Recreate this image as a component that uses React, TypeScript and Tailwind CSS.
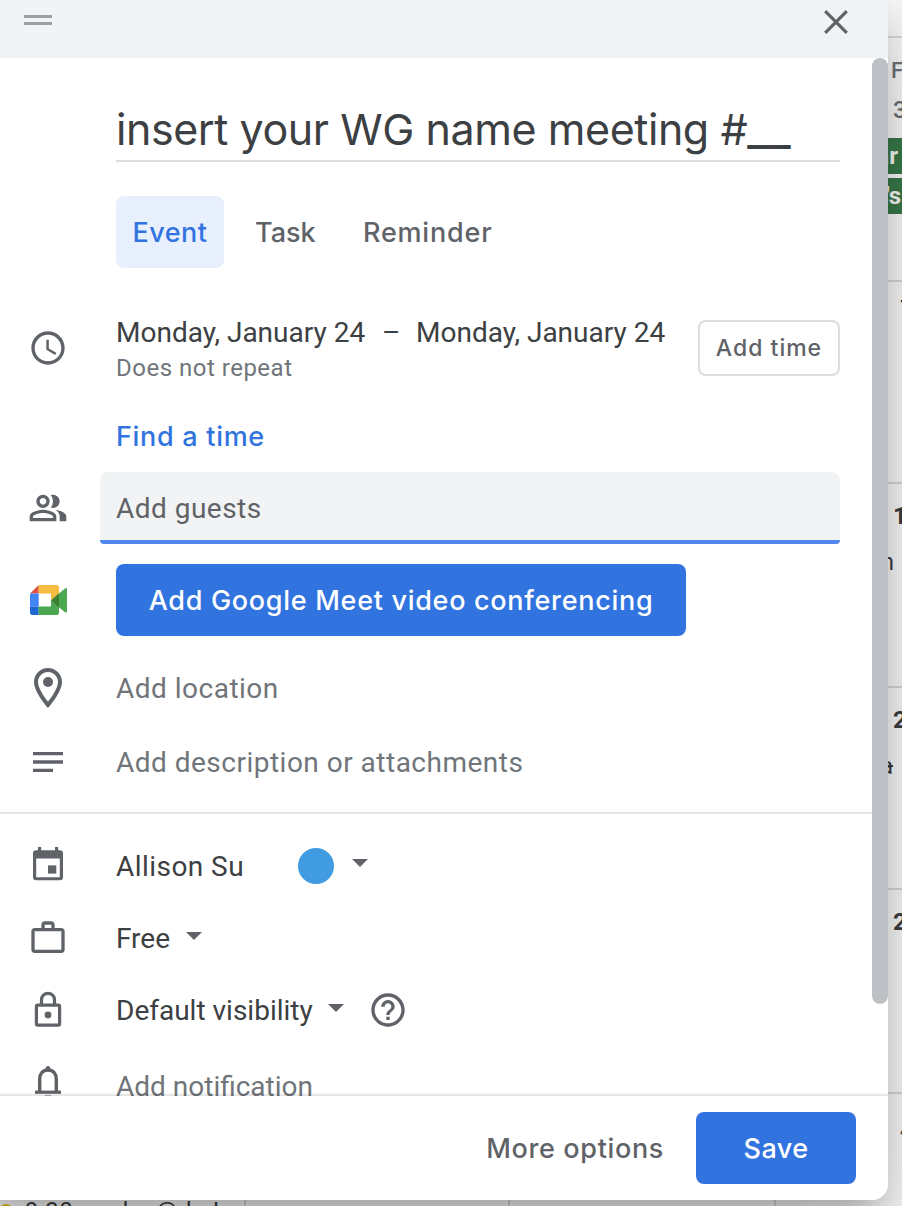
import type { ReactNode } from "react";
import { MdOutlinePeopleAlt, MdAccessTime, MdHelpOutline, MdNotes, MdWorkOutline } from "react-icons/md";

function Row({ icon, className, children }: { icon?: ReactNode; className: string; children: ReactNode }) {
  return (
    <div className={`flex items-center ${className}`}>
      <div className="flex w-24 shrink-0 items-center justify-center text-[#5f6368]">{icon}</div>
      <div className="flex min-w-0 flex-1 items-center">{children}</div>
    </div>
  );
}

function MeetLogo() {
  return (
    <svg width="37" height="30" viewBox="0 0 37 30">
      <path d="M0 8.5 8.7 0v8.5z" fill="#dd5144" />
      <path d="M8.7 0H26.5Q29 0 29 2.5V9l-8 6.5V8.5H8.7z" fill="#f6bc42" />
      <path d="M0 8.5h8.7v13H0z" fill="#4285f4" />
      <path d="M0 21.5h8.7V30H2.5Q0 30 0 27.5z" fill="#1f67d2" />
      <path d="M8.7 21.5H21V15l8 6.5v6Q29 30 26.5 30H8.7z" fill="#4ba851" />
      <path d="m21 15.2 8-7v14.6z" fill="#3b8035" />
      <path d="m29 8.4 6-5q2-1 2 1v21.8q0 2-2 1l-6-5z" fill="#4ba851" />
    </svg>
  );
}

function PinIcon() {
  return (
    <svg width="28" height="40" viewBox="5 2 14 20" fill="currentColor">
      <path d="M12 2C8.13 2 5 5.13 5 9c0 5.25 7 13 7 13s7-7.75 7-13c0-3.87-3.13-7-7-7zm0 2c2.76 0 5 2.24 5 5 0 2.88-2.88 7.19-5 9.88C9.92 16.21 7 11.85 7 9c0-2.76 2.24-5 5-5z" />
      <circle cx="12" cy="9" r="2.5" />
    </svg>
  );
}

function EventIcon() {
  return (
    <svg width="30" height="34" viewBox="0 0 30 34" className="mb-1" fill="currentColor">
      <path d="M5 0h3.2v4H5zM22 0h3.2v4H22z" />
      <path fillRule="evenodd" d="M3 3.3h24a3 3 0 0 1 3 3v24a3 3 0 0 1-3 3H3a3 3 0 0 1-3-3v-24a3 3 0 0 1 3-3zM3.2 11.6v18.6h23.6V11.6z" />
      <path d="M15 18.4h8.3v8.2H15z" />
    </svg>
  );
}

function LockIcon() {
  return (
    <svg width="40" height="40" viewBox="0 0 40 40" fill="none" stroke="currentColor" strokeWidth="3.2">
      <rect x="8.4" y="15.2" width="23.2" height="20" rx="1.4" />
      <path d="M13.5 15V9.8a6.5 6.5 0 0 1 13 0V15" />
      <circle cx="20" cy="25" r="3.4" fill="currentColor" stroke="none" />
    </svg>
  );
}

function BellIcon() {
  return (
    <svg width="40" height="40" viewBox="0 0 40 40" className="mb-1" fill="none" stroke="currentColor" strokeWidth="3.4">
      <path d="M11.7 28V15.2C11.7 9.6 15 6 20 6s8.3 3.6 8.3 9.2V28" />
      <path d="M7 28.2h26" strokeWidth="3.2" />
      <path d="M17.7 6V4.3a2.3 2.3 0 0 1 4.6 0V6z" fill="currentColor" stroke="none" />
      <path d="M16.7 31.5h6.6a3.3 3.3 0 0 1-6.6 0z" fill="currentColor" stroke="none" />
    </svg>
  );
}

function Caret({ className = "mb-1" }: { className?: string }) {
  return (
    <svg width="16" height="8" viewBox="0 0 16 8" className={className}>
      <path d="M0 0h16L8 8z" fill="#5f6368" />
    </svg>
  );
}

function CloseIcon() {
  return (
    <svg width="24" height="24" viewBox="0 0 24 24" stroke="#5f6368" strokeWidth="3.2">
      <path d="m1.2 1.2 21.6 21.6M22.8 1.2 1.2 22.8" />
    </svg>
  );
}

function CalendarBackdrop() {
  return (
    <div className="grid h-full grid-cols-[244px_264px_266px_1fr] bg-white">
      <div className="flex flex-col justify-end overflow-hidden">
        <div className="flex h-[7px] items-start font-[Roboto] text-2xl leading-6 whitespace-pre text-[#3c4043]">
          <span className="mt-[5px] ml-[-1px] size-[14px] shrink-0 rounded-full bg-[#f6bf26]" />
          <span className="ml-3 tracking-[0.5px]">9:30am due@duJ</span>
        </div>
      </div>
      <div className="border-l-2 border-[#dadce0]" />
      <div className="border-l-2 border-[#dadce0]" />
      <div className="flex flex-col overflow-hidden border-l-2 border-[#dadce0] font-[Roboto] text-[#3c4043]">
        <div className="h-[38px] shrink-0 border-b-2 border-[#dadce0]" />
        <div className="h-[244px] shrink-0 border-b-2 border-[#dadce0] whitespace-nowrap">
          <div className="h-9 pt-[21px] pl-[115px] text-[22px] leading-6 font-medium text-[#70757a]">FRI</div>
          <div className="h-[64px] pt-[24px] pl-[117px] text-2xl leading-6 font-medium text-[#70757a]">31</div>
          <div className="mb-1 flex h-9 items-center bg-[#3b7d4b] pl-[52px] text-2xl font-bold text-white">
            <span className="w-[70px] text-right">Year</span>
          </div>
          <div className="flex h-9 items-center bg-[#3b7d4b] pl-[20px] text-2xl font-bold text-white">
            <span className="w-[105px] text-right">Year's</span>
          </div>
        </div>
        <div className="h-[202px] shrink-0 border-b-2 border-[#dadce0] pt-[15px] pl-[124px] text-2xl leading-6 font-medium">7</div>
        <div className="h-[204px] shrink-0 border-b-2 border-[#dadce0] pt-5 whitespace-nowrap">
          <div className="pl-[117px] text-2xl leading-6 font-bold">14</div>
          <div className="mt-[22px] flex w-[118px] justify-end text-2xl leading-6">Sign in</div>
        </div>
        <div className="h-[202px] shrink-0 border-b-2 border-[#dadce0] pt-5 whitespace-nowrap">
          <div className="pl-[117px] text-2xl leading-6 font-bold">21</div>
          <div className="mt-[22px] flex w-[117px] justify-end text-2xl leading-6 line-through">Yoga</div>
        </div>
        <div className="h-[204px] shrink-0 border-b-2 border-[#dadce0] pt-5 pl-[117px] text-2xl leading-6 font-bold">28</div>
        <div className="pt-6 pl-[124px] text-2xl leading-6 font-medium">4</div>
      </div>
    </div>
  );
}

export default function App() {
  return (
    <div className="relative h-[1206px] w-[902px] overflow-hidden font-[Roboto,sans-serif]">
      <CalendarBackdrop />
      <div className="absolute -top-[14px] -left-5 flex h-[1214px] w-[908px] flex-col overflow-hidden rounded-2xl bg-white pl-5 shadow-[0_48px_76px_6px_rgba(0,0,0,0.14),0_18px_92px_16px_rgba(0,0,0,0.12),0_22px_30px_-14px_rgba(0,0,0,0.2)]">
        <header className="-ml-5 flex h-[72px] shrink-0 items-center justify-between bg-[#f1f3f4] pr-10 pl-11">
          <div className="flex w-7 flex-col gap-1 self-start pt-[29px]">
            <span className="h-[3px] bg-[#9aa0a6]" />
            <span className="h-[3px] bg-[#9aa0a6]" />
          </div>
          <CloseIcon />
        </header>

        <main className="flex h-[1038px] shrink-0 overflow-hidden">
          <div className="w-[872px] shrink-0">
            <div className="mr-8 ml-[116px] flex h-[104px] items-end border-b-2 border-[#dadce0] pb-[5px] font-[Inter] text-[43px] leading-[52px] tracking-[-0.43px] whitespace-nowrap text-[#3c4043]">
              <div className="h-[52px]">
                insert your WG name meeting #<span className="text-[48px] leading-none tracking-[-0.3px]">__</span>
              </div>
            </div>

            <div className="mt-[34px] ml-[116px] flex h-[72px] items-center font-[Inter] text-[27px] font-medium text-[#5f6368]">
              <span className="flex h-full w-[108px] items-center justify-center rounded-lg bg-[#e8f0fe] pt-[2px] tracking-[0.5px] text-[#3174e0]">Event</span>
              <span className="mt-[2px] ml-[31px] w-[60px]">Task</span>
              <span className="mt-[2px] ml-12 tracking-[0.8px]">Reminder</span>
            </div>

            <Row className="mt-[52px] h-14 pr-8" icon={<MdAccessTime size={40} />}>
              <div className="mt-[5px] ml-5 flex-1 whitespace-nowrap">
                <div className="flex text-[28px] leading-9 text-[#3c4043]">
                  <span className="w-[249px]">Monday, January 24</span>
                  <span className="w-[51px] pl-[17px]">–</span>
                  <span>Monday, January 24</span>
                </div>
                <div className="-mt-px mb-px text-2xl leading-9 tracking-[0.5px] text-[#70757a]">Does not repeat</div>
              </div>
              <button className="h-14 w-[142px] rounded-lg border-2 border-[#dadce0] font-[Inter] text-[23px] font-medium tracking-[1px] whitespace-nowrap text-[#5f6368]">
                Add time
              </button>
            </Row>

            <Row className="mt-10 h-10">
              <span className="mt-[2px] ml-5 font-[Inter] text-[27px] font-medium tracking-[0.7px] text-[#3174e0]">Find a time</span>
            </Row>

            <Row className="mt-4 h-[72px] pr-8" icon={<MdOutlinePeopleAlt size={40} />}>
              <div className="ml-1 flex h-[72px] flex-1 items-center rounded-lg rounded-b-[4px] border-b-4 border-[#4f87ec] bg-[#f1f3f4] pl-4 text-[28px] tracking-[0.48px] text-[#5f6368]">
                <span className="mt-1.5">Add guests</span>
              </div>
            </Row>

            <Row className="mt-5 h-[72px]" icon={<MeetLogo />}>
              <button className="ml-5 h-[72px] w-[570px] rounded-lg bg-[#3174e0] pt-[2px] font-[Inter] text-[27px] font-medium tracking-[0.7px] whitespace-nowrap text-white">
                Add Google Meet video conferencing
              </button>
            </Row>

            <Row className="mt-4 h-[72px]" icon={<PinIcon />}>
              <span className="mt-[2px] ml-5 text-[28px] tracking-[0.49px] text-[#70757a]">Add location</span>
            </Row>
            <Row className="mt-[2px] h-[72px]" icon={<MdNotes size={40} />}>
              <span className="mt-[2px] ml-5 text-[28px] tracking-[0.49px] text-[#70757a]">Add description or attachments</span>
            </Row>

            <div className="mt-[14px] h-[2px] bg-[#e5e5e5]" />

            <Row className="mt-4 h-[72px]" icon={<EventIcon />}>
              <span className="mt-[2px] ml-5 w-[182px] text-[28px] tracking-[0.45px] text-[#3c4043]">Allison Su</span>
              <span className="mr-[18px] size-9 rounded-full bg-[#419be0]" />
              <Caret className="mb-1.5" />
            </Row>
            <Row className="h-[72px]" icon={<MdWorkOutline size={40} />}>
              <span className="mt-[2px] mr-4 ml-5 text-[28px] text-[#3c4043]">Free</span>
              <Caret />
            </Row>
            <Row className="h-[72px]" icon={<LockIcon />}>
              <span className="mt-[2px] mr-[15px] ml-5 text-[28px] text-[#3c4043]">Default visibility</span>
              <Caret />
              <MdHelpOutline size={40} className="ml-6 text-[#5f6368]" />
            </Row>
            <Row className="h-20" icon={<BellIcon />}>
              <span className="mt-[2px] ml-5 text-[28px] text-[#70757a]">Add notification</span>
            </Row>
          </div>
          <div className="h-[946px] w-4 shrink-0 rounded-full bg-[#bdc1c6]" />
        </main>

        <footer className="z-10 -ml-5 flex flex-1 items-center justify-end bg-white pr-8 font-[Inter] text-[27px] font-medium shadow-[0_-2px_0_rgba(0,0,0,0.06),0_-2px_4px_rgba(0,0,0,0.06)]">
          <span className="mt-[2px] mr-8 tracking-[0.65px] text-[#5f6368]">More options</span>
          <button className="h-[72px] w-40 rounded-lg bg-[#3174e0] pt-[2px] tracking-[0.4px] text-white">Save</button>
        </footer>
      </div>
    </div>
  );
}
